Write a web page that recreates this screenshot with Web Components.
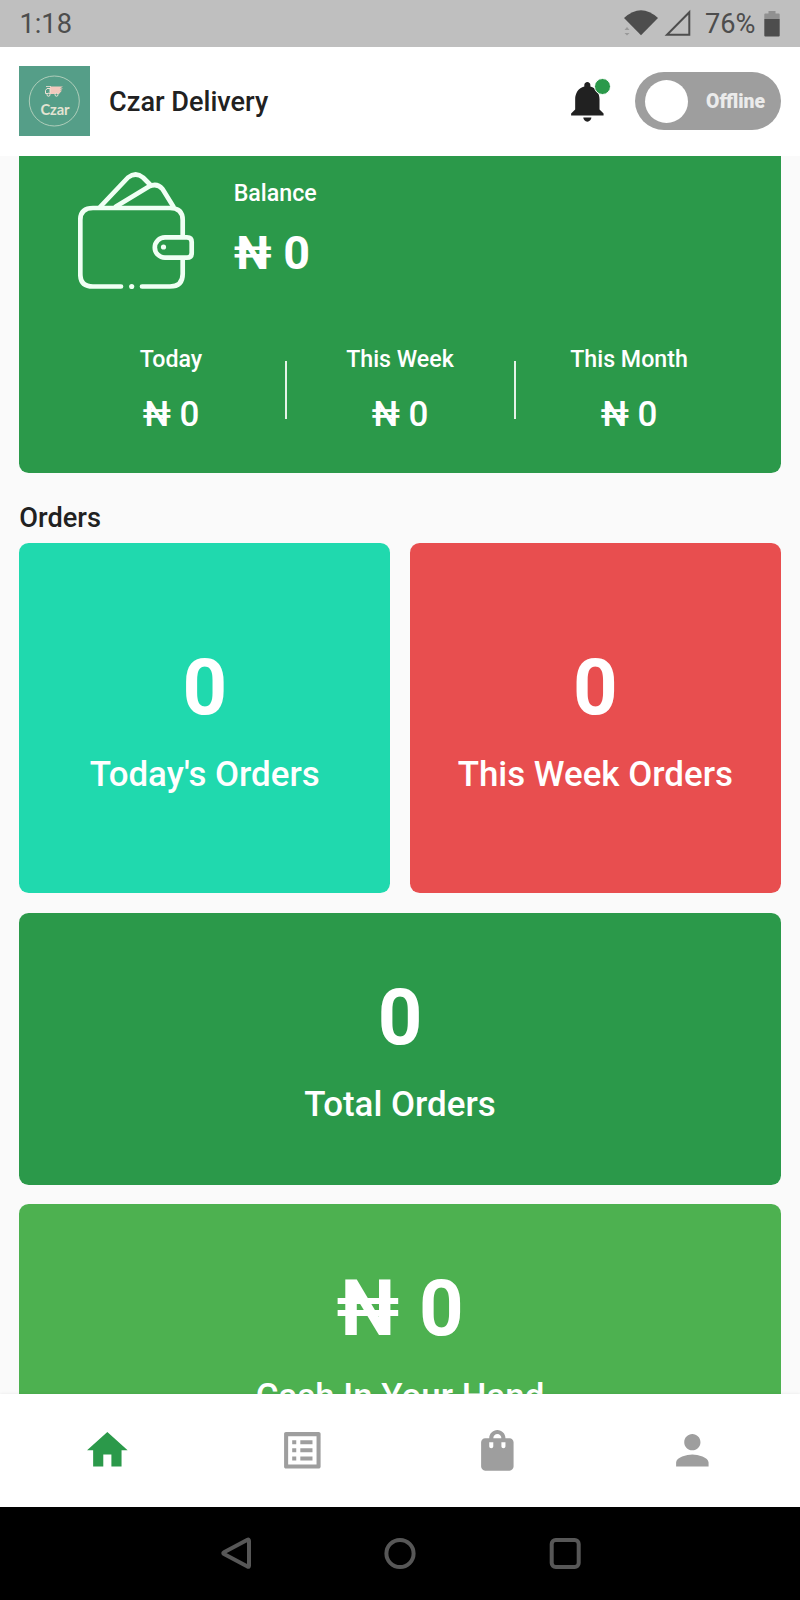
<!DOCTYPE html>
<html lang="en">
<head>
<meta charset="UTF-8">
<meta name="viewport" content="width=device-width, initial-scale=1.0">
<title>Czar Delivery</title>
<style>
  html, body {
    margin: 0;
    height: 100%;
  }
  body {
    font-family: Roboto, "Noto Sans", sans-serif;
    background: #fafafa;
    color: #212121;
    overflow: hidden;
  }
</style>
</head>
<body>
<delivery-app></delivery-app>

<script>
class StatusBar extends HTMLElement {
  connectedCallback() {
    this.attachShadow({ mode: 'open' });
    this.shadowRoot.innerHTML = `
      <style>
        :host {
          display: flex;
          align-items: center;
          box-sizing: border-box;
          height: 46.7px;
          padding: 0 20.5px 0 19.5px;
          background: #bfbfbf;
          color: #4d4d4d;
          font-size: 27.2px;
        }
        .time { flex: 1; padding-top: 1px; }
        svg { display: block; }
        .percent { margin: 0 8px 0 13px; padding-top: 1px; }
      </style>
      <span class="time">1:18</span>
      <svg width="36" height="28" viewBox="0 0 36 28">
        <path d="M1 9 Q18 -6.5 35 9 L18 26.2z" fill="#4d4d4d"/>
        <path d="M1.500 21l2.500-3 2.500 3zM1.500 24l2.500 2.500 2.500-2.500z" fill="#999"/>
      </svg>
      <svg width="28" height="28" viewBox="0 0 28 28" style="margin-left:5px">
        <path d="M25.3 3.2V25.7H3z" fill="none" stroke="#4d4d4d" stroke-width="2"/>
      </svg>
      <span class="percent">76%</span>
      <svg width="16" height="27" viewBox="0 0 16 27">
        <path d="M4.5 1h7v2.5h3.2q1 0 1 1V9H.3V4.5q0-1 1-1h3.2z" fill="#909090"/>
        <path d="M.3 9h15.4v16.5q0 1-1 1H1.300q-1 0-1-1z" fill="#4d4d4d"/>
      </svg>
    `;
  }
}
customElements.define('status-bar', StatusBar);

class BrandLogo extends HTMLElement {
  connectedCallback() {
    this.attachShadow({ mode: 'open' });
    this.shadowRoot.innerHTML = `
      <style>
        :host { display: block; width: 70.5px; height: 70px; background: #559e88; }
        svg { display: block; width: 100%; height: 100%; }
      </style>
      <svg viewBox="0 0 70.5 70">
        <circle cx="35.300" cy="35" r="25" fill="none" stroke="#b9d2c0" stroke-width=".9"/>
        <g fill="#f3c9bd">
          <path d="M31 20.500H44l-3 2h3l-3 2h2l-3 3.500H31z"/>
          <path d="M31 22.500v5H26.500v-3l1.500-2z" fill="none" stroke="#f1e3d6" stroke-width="1"/>
          <path d="M27 20.500h5" stroke="#f1e3d6" stroke-width=".8"/>
          <circle cx="29.500" cy="28.700" r="1.500" fill="#559e88" stroke="#f1e3d6"/>
          <circle cx="37.500" cy="28.700" r="1.500" fill="#559e88" stroke="#f1e3d6"/>
        </g>
        <text x="36" y="49" text-anchor="middle" textLength="29" font-family="Lato, sans-serif" font-weight="700" font-size="14.700" fill="#e3e3d2">Czar</text>
      </svg>
    `;
  }
}
customElements.define('brand-logo', BrandLogo);

class OnlineToggle extends HTMLElement {
  connectedCallback() {
    this.attachShadow({ mode: 'open' });
    this.shadowRoot.innerHTML = `
      <style>
        :host {
          display: flex;
          align-items: center;
          justify-content: space-between;
          box-sizing: border-box;
          width: 146px;
          height: 58.4px;
          padding: 0 16px 0 10px;
          border-radius: 30px;
          background: #9e9e9e;
          color: #ebebeb;
          font-size: 19.400px;
          font-weight: 900;
        }
        .knob { width: 43px; height: 43px; border-radius: 50%; background: #fff; }
      </style>
      <span class="knob"></span>
      <slot></slot>
    `;
  }
}
customElements.define('online-toggle', OnlineToggle);

class NotifyBell extends HTMLElement {
  connectedCallback() {
    this.attachShadow({ mode: 'open' });
    this.shadowRoot.innerHTML = `
      <style>
        :host { display: block; position: relative; width: 48.7px; height: 48.7px; }
        svg { display: block; width: 100%; height: 100%; fill: #212121; }
        .dot {
          position: absolute;
          top: 1px;
          right: 0;
          width: 15.500px;
          height: 15.500px;
          border: 1.500px solid #fff;
          border-radius: 50%;
          background: #2b994a;
        }
      </style>
      <svg viewBox="0 0 24 24"><path d="M12 22c1.100 0 2-.9 2-2h-4c0 1.100.89 2 2 2zm6-6v-5c0-3.070-1.640-5.640-4.500-6.320V4c0-.83-.67-1.500-1.500-1.500s-1.500.67-1.500 1.500v.68C7.630 5.360 6 7.920 6 11v5l-2 2v1h16v-1l-2-2z"/></svg>
      <span class="dot"></span>
    `;
  }
}
customElements.define('notify-bell', NotifyBell);

class AppHeader extends HTMLElement {
  connectedCallback() {
    this.attachShadow({ mode: 'open' });
    this.shadowRoot.innerHTML = `
      <style>
        :host {
          display: flex;
          align-items: center;
          box-sizing: border-box;
          height: 109.1px;
          padding: 0 19px 0 19.3px;
          background: #fff;
        }
        .title { flex: 1; margin-left: 19.3px; padding-top: 1.5px; font-size: 27.1px; font-weight: 500; }
        online-toggle { margin-left: 23.6px; }
      </style>
      <brand-logo></brand-logo>
      <span class="title"><slot></slot></span>
      <notify-bell></notify-bell>
      <online-toggle>Offline</online-toggle>
    `;
  }
}
customElements.define('app-header', AppHeader);

class BalanceCard extends HTMLElement {
  connectedCallback() {
    this.attachShadow({ mode: 'open' });
    this.shadowRoot.innerHTML = `
      <style>
        :host {
          display: block;
          box-sizing: border-box;
          height: 317.5px;
          padding: 16.2px 58.7px 0;
          border-radius: 0 0 9.7px 9.7px;
          background: #2b994a;
          color: #fff;
        }
        .top { display: flex; gap: 38.7px; }
        svg { display: block; width: 117px; height: 117px; }
        .label { font-size: 23.2px; line-height: 28px; font-weight: 500; }
        .balance { padding-top: 6.7px; }
        .balance .amount { margin-top: 19.8px; font-size: 46.7px; line-height: 55px; font-weight: 700; }
        .stats { display: flex; align-items: center; margin: 56px -20.5px 0; }
        .stat { flex: 1; text-align: center; }
        .stat .amount { margin-top: 21px; font-size: 35px; line-height: 41px; font-weight: 500; }
        .line { width: 2px; height: 58.4px; background: #e4f3e8; }
      </style>
      <div class="top">
        <svg viewBox="0 0 117 117" fill="none" stroke="#f0fff4" stroke-width="4.700" stroke-linecap="round" stroke-linejoin="round">
          <path d="M43 114.500H15Q2.300 114.500 2.300 102V48Q2.300 36 15 36H92Q104.700 36 104.700 48V64M104.700 87v15Q104.700 114.500 92 114.500H64"/>
          <path d="M87 65.300h22q4.700 0 4.700 4.700v11q0 4.700-4.700 4.700H87a10.200 10.200 0 0 1 0-20.400z"/>
          <path d="M22.500 34.500L50 5.500Q57.700-.5 65 5.500L71.500 12M38 34.500L71 14.500Q79 10.500 84.500 17L95.300 34.500"/>
          <circle cx="85.500" cy="75" r="2.600" fill="#f0fff4" stroke="none"/>
          <circle cx="53.700" cy="114.500" r="2.600" fill="#f0fff4" stroke="none"/>
        </svg>
        <div class="balance">
          <div class="label">Balance</div>
          <div class="amount">₦ 0</div>
        </div>
      </div>
      <div class="stats">
        <div class="stat"><div class="label">Today</div><div class="amount">₦ 0</div></div>
        <div class="line"></div>
        <div class="stat"><div class="label">This Week</div><div class="amount">₦ 0</div></div>
        <div class="line"></div>
        <div class="stat"><div class="label">This Month</div><div class="amount">₦ 0</div></div>
      </div>
    `;
  }
}
customElements.define('balance-card', BalanceCard);

class CountCard extends HTMLElement {
  connectedCallback() {
    this.attachShadow({ mode: 'open' });
    this.shadowRoot.innerHTML = `
      <style>
        :host {
          display: flex;
          flex-direction: column;
          align-items: center;
          justify-content: center;
          gap: 21.3px;
          box-sizing: border-box;
          height: 271.6px;
          border-radius: 9.7px;
          background: var(--card-color, #2b994a);
          color: #fff;
        }
        :host([tall]) { height: 350px; }
        .count { font-size: 77.86px; line-height: 91px; font-weight: 700; }
        .label { font-size: 34.9px; line-height: 41px; font-weight: 500; }
      </style>
      <div class="count">${this.getAttribute('count')}</div>
      <div class="label"><slot></slot></div>
    `;
  }
}
customElements.define('count-card', CountCard);

class TabBar extends HTMLElement {
  connectedCallback() {
    this.attachShadow({ mode: 'open' });
    this.shadowRoot.innerHTML = `
      <style>
        :host {
          display: grid;
          grid-template-columns: repeat(4, 1fr);
          place-items: center;
          box-sizing: border-box;
          height: 112.8px;
          padding: 0 9.7px;
          background: #fff;
          box-shadow: 0 0 3px rgba(0, 0, 0, .08);
          position: relative;
        }
        svg { display: block; width: 48.7px; height: 48.7px; fill: #9e9e9e; }
        .active { fill: #2b994a; }
      </style>
      <svg class="active" viewBox="0 0 24 24"><path d="M10 20v-6h4v6h5v-8h3L12 3 2 12h3v8z"/></svg>
      <svg viewBox="0 0 24 24"><path d="M19 5v14H5V5h14m1.100-2H3.900c-.5 0-.9.4-.9.9v16.200c0 .4.4.9.9.9h16.200c.4 0 .9-.5.9-.9V3.900c0-.5-.5-.9-.9-.9zM11 7h6v2h-6V7zm0 4h6v2h-6v-2zm0 4h6v2h-6zM7 7h2v2H7zm0 4h2v2H7zm0 4h2v2H7z"/></svg>
      <svg viewBox="0 0 24 24"><path d="M18 6h-2c0-2.210-1.790-4-4-4S8 3.790 8 6H6c-1.100 0-2 .9-2 2v12c0 1.100.9 2 2 2h12c1.100 0 2-.9 2-2V8c0-1.100-.9-2-2-2zm-8 4c0 .55-.45 1-1 1s-1-.45-1-1V8h2v2zm2-6c1.100 0 2 .9 2 2h-4c0-1.100.9-2 2-2zm4 6c0 .55-.45 1-1 1s-1-.45-1-1V8h2v2z"/></svg>
      <svg viewBox="0 0 24 24"><path d="M12 12c2.210 0 4-1.790 4-4s-1.790-4-4-4-4 1.790-4 4 1.790 4 4 4zm0 2c-2.670 0-8 1.340-8 4v2h16v-2c0-2.660-5.330-4-8-4z"/></svg>
    `;
  }
}
customElements.define('tab-bar', TabBar);

class SystemNav extends HTMLElement {
  connectedCallback() {
    this.attachShadow({ mode: 'open' });
    this.shadowRoot.innerHTML = `
      <style>
        :host {
          display: flex;
          align-items: center;
          justify-content: center;
          gap: 128.5px;
          height: 93.2px;
          background: #000;
        }
        svg { display: block; width: 36px; height: 36px; fill: none; stroke: #575757; stroke-width: 4; stroke-linejoin: round; }
      </style>
      <svg viewBox="0 0 36 36"><path d="M29.500 4.800Q31 4 31 6V30.500Q31 32.500 29.500 31.500L6 19Q4.500 18 6 17.200z"/></svg>
      <svg viewBox="0 0 36 36"><circle cx="18" cy="18.500" r="13.600"/></svg>
      <svg viewBox="0 0 36 36"><rect x="4.700" y="5" width="27" height="27" rx="4"/></svg>
    `;
  }
}
customElements.define('system-nav', SystemNav);

class DeliveryApp extends HTMLElement {
  connectedCallback() {
    this.attachShadow({ mode: 'open' });
    this.shadowRoot.innerHTML = `
      <style>
        :host { display: flex; flex-direction: column; height: 1600px; }
        main { flex: 1; min-height: 0; overflow: hidden; padding: 0 19.3px; }
        h2 { margin: 28.9px 0 9.2px; font-size: 27.2px; line-height: 32px; font-weight: 500; }
        .cards { display: grid; grid-template-columns: 1fr 1fr; gap: 19.700px; }
        .wide { grid-column: span 2; }
      </style>
      <status-bar></status-bar>
      <app-header>Czar Delivery</app-header>
      <main>
        <balance-card></balance-card>
        <h2>Orders</h2>
        <div class="cards">
          <count-card tall count="0" style="--card-color:#20d9ae">Today's Orders</count-card>
          <count-card tall count="0" style="--card-color:#e84e4f">This Week Orders</count-card>
          <count-card class="wide" count="0">Total Orders</count-card>
          <count-card class="wide" count="₦ 0" style="--card-color:#4db150">Cash In Your Hand</count-card>
        </div>
      </main>
      <tab-bar></tab-bar>
      <system-nav></system-nav>
    `;
  }
}
customElements.define('delivery-app', DeliveryApp);
</script>
</body>
</html>
